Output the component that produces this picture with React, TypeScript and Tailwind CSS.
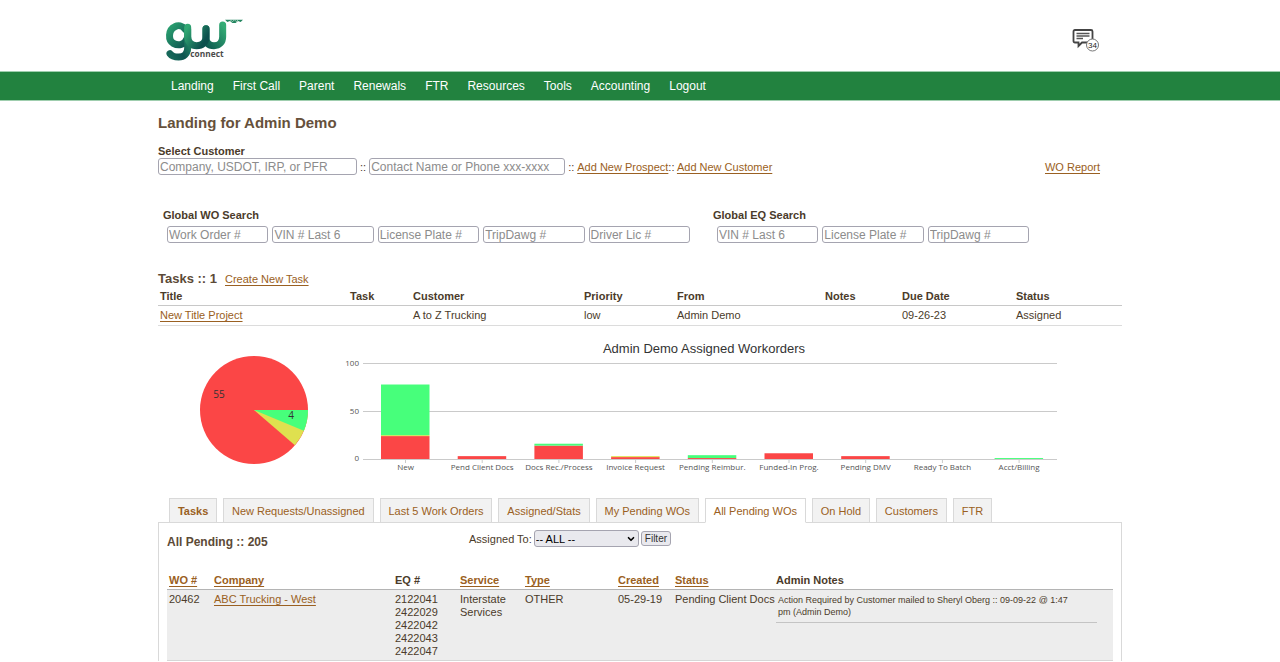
import { ReactNode } from "react";
import { ChevronDown } from "lucide-react";

const NAV = ["Landing", "First Call", "Parent", "Renewals", "FTR", "Resources", "Tools", "Accounting", "Logout"];

const TABS = [
  "Tasks",
  "New Requests/Unassigned",
  "Last 5 Work Orders",
  "Assigned/Stats",
  "My Pending WOs",
  "All Pending WOs",
  "On Hold",
  "Customers",
  "FTR",
];

const BARS = [
  { label: "New", red: 24, yellow: 1, green: 53 },
  { label: "Pend Client Docs", red: 3, yellow: 0, green: 0 },
  { label: "Docs Rec./Process", red: 14, yellow: 0, green: 2 },
  { label: "Invoice Request", red: 2, yellow: 1, green: 0 },
  { label: "Pending Reimbur.", red: 1, yellow: 0, green: 3 },
  { label: "Funded-In Prog.", red: 6, yellow: 0, green: 0 },
  { label: "Pending DMV", red: 3, yellow: 0, green: 0 },
  { label: "Ready To Batch", red: 0, yellow: 0, green: 0 },
  { label: "Acct/Billing", red: 0, yellow: 0, green: 1 },
];

const RED = "#fb4646";
const YELLOW = "#dfe04f";
const GREEN = "#47ff7b";

function Link({ children, bold = false }: { children: ReactNode; bold?: boolean }) {
  return (
    <a
      href="#"
      className={`text-[#9a6022] underline decoration-1 underline-offset-2 [text-decoration-skip-ink:none] ${bold ? "font-bold" : ""}`}
    >
      {children}
    </a>
  );
}

function Field({ name, className = "w-full" }: { name: string; className?: string }) {
  return (
    <input
      type="text"
      aria-label={name}
      placeholder={name}
      className={`h-[17px] rounded-[3px] border border-[#a5a4b0] bg-white px-px text-[12px] leading-[15px] text-[#333] placeholder:text-[#8c8c8c] ${className}`}
    />
  );
}

function Logo() {
  return (
    <svg viewBox="45 22 240 132" className="h-11 w-20" role="img" aria-label="GW Connect">
      <defs>
        <linearGradient id="ring" x1="0" y1="0" x2="1" y2="1">
          <stop offset="0" stopColor="#2aa070" />
          <stop offset="1" stopColor="#0e5550" />
        </linearGradient>
        <linearGradient id="tail" x1="1" y1="0" x2="0" y2="1">
          <stop offset="0" stopColor="#2a9d6e" />
          <stop offset="0.6" stopColor="#0d5450" />
          <stop offset="1" stopColor="#17695a" />
        </linearGradient>
        <linearGradient id="cupA" x1="0" y1="0" x2="1" y2="0.6">
          <stop offset="0" stopColor="#31a873" />
          <stop offset="1" stopColor="#0c504d" />
        </linearGradient>
        <linearGradient id="cupB" x1="0" y1="1" x2="1" y2="0">
          <stop offset="0" stopColor="#0d5a50" />
          <stop offset="1" stopColor="#34ac75" />
        </linearGradient>
      </defs>
      <g fill="none" strokeLinecap="round" strokeWidth="21">
        <path d="M168 54 V82 C168 99 178 105 192 105 C208 105 218 94 218 78 V43" stroke="url(#cupB)" />
        <path d="M106 56 C97 44 84 43 75 48 C54 57 54 89 70 98 C86 107 104 102 110 86" stroke="url(#ring)" />
        <path d="M113 56 V112 C113 130 101 139 86 139 C75 139 65 136 60 129" stroke="url(#tail)" />
        <path d="M113 50 V78 C114 96 125 105 140 105 C157 105 168 95 168 80 V54" stroke="url(#cupA)" />
      </g>
      <path d="M225 27 H279 L272 34 L264 31 L257 37 H247 L240 31 L232 34 Z" fill="#23855f" />
      <path d="M240 27 L248 33 L253 27 L259 33 L265 27" fill="none" stroke="#c7e3d6" strokeWidth="2" />
      <text
        x="121"
        y="139"
        fontSize="25"
        fontWeight="700"
        fill="#4b4b4b"
        stroke="#fff"
        strokeWidth="3"
        paintOrder="stroke"
        fontFamily="Open Sans, sans-serif"
      >
        connect
      </text>
    </svg>
  );
}

function MessageIcon() {
  return (
    <svg viewBox="0 0 28 24" className="h-6 w-7" aria-hidden="true">
      <path
        d="M3 2 H19 Q20.500 2 20.500 3.500 V13 Q20.500 14.500 19 14.500 H10 L6.500 18 V14.500 H3 Q1.500 14.500 1.500 13 V3.500 Q1.500 2 3 2 Z"
        fill="none"
        stroke="#444"
        strokeWidth="1.800"
      />
      <path d="M4.500 5.500 H17.500 M4.500 8 H17.500 M4.500 10.500 H11" stroke="#555" strokeWidth="1.300" />
      <circle cx="20.500" cy="17" r="6" fill="#fff" stroke="#777" strokeWidth="1" />
      <text x="20.500" y="20" fontSize="8" textAnchor="middle" fill="#222" fontFamily="Liberation Sans, sans-serif">
        34
      </text>
    </svg>
  );
}

function PieChart() {
  return (
    <svg viewBox="0 0 110 110" className="h-[110px] w-[110px]" role="img" aria-label="Workorders by state">
      <circle cx="55" cy="55" r="54" fill={RED} />
      <path d="M55 55 L109 55 A54 54 0 0 1 95.900 90.200 Z" fill={YELLOW} />
      <path d="M55 55 L109 55 A54 54 0 0 1 104.800 75.800 Z" fill={GREEN} />
      <g fontSize="10" fill="#333" textAnchor="middle" fontFamily="Open Sans, sans-serif">
        <text x="20" y="43">55</text>
        <text x="92" y="64">4</text>
      </g>
    </svg>
  );
}

function BarChart() {
  const base = 119;
  const perUnit = 0.955;
  return (
    <svg viewBox="0 0 722 138" className="block w-full" role="img" aria-label="Admin Demo Assigned Workorders">
      <text x="364" y="13" fontSize="13" textAnchor="middle" fill="#333" fontFamily="Liberation Sans, sans-serif">
        Admin Demo Assigned Workorders
      </text>
      <g stroke="#cacaca" strokeWidth="1">
        <path d="M23 23.500 H717 M23 71.500 H717 M23 119.500 H717" />
      </g>
      <g fontSize="8" fill="#555" textAnchor="end" fontFamily="Open Sans, sans-serif">
        <text x="19" y="26">100</text>
        <text x="19" y="74">50</text>
        <text x="19" y="121">0</text>
      </g>
      {BARS.map((b, i) => {
        const cx = 65.5 + i * 76.7;
        const r = b.red * perUnit;
        const y = b.yellow * perUnit;
        const g = b.green * perUnit;
        return (
          <g key={b.label}>
            <path d={`M${cx} 119 V123`} stroke="#cacaca" />
            <rect x={cx - 24.5} y={base - r} width="48.5" height={r} fill={RED} />
            <rect x={cx - 24.5} y={base - r - y} width="48.5" height={y} fill={YELLOW} />
            <rect x={cx - 24.5} y={base - r - y - g} width="48.5" height={g} fill={GREEN} />
            <text x={cx} y="130" fontSize="8" textAnchor="middle" fill="#555" fontFamily="Open Sans, sans-serif">
              {b.label}
            </text>
          </g>
        );
      })}
    </svg>
  );
}

function TaskTable() {
  return (
    <table className="w-full table-fixed border-collapse text-left text-[11px] leading-[14px]">
      <colgroup>
        <col className="w-[190px]" />
        <col className="w-[63px]" />
        <col className="w-[171px]" />
        <col className="w-[93px]" />
        <col className="w-[148px]" />
        <col className="w-[77px]" />
        <col className="w-[114px]" />
        <col />
      </colgroup>
      <thead>
        <tr className="border-b border-[#c8c8c8]">
          {["Title", "Task", "Customer", "Priority", "From", "Notes", "Due Date", "Status"].map((h) => (
            <th key={h} className="px-[2px] py-[2px] font-bold">
              {h}
            </th>
          ))}
        </tr>
      </thead>
      <tbody>
        <tr className="border-b border-[#dcdcdc]">
          <td className="px-[2px] pt-[2px] pb-[3px]">
            <Link>New Title Project</Link>
          </td>
          <td />
          <td className="px-[2px] pt-[2px] pb-[3px]">A to Z Trucking</td>
          <td className="px-[2px] pt-[2px] pb-[3px]">low</td>
          <td className="px-[2px] pt-[2px] pb-[3px]">Admin Demo</td>
          <td />
          <td className="px-[2px] pt-[2px] pb-[3px]">09-26-23</td>
          <td className="px-[2px] pt-[2px] pb-[3px]">Assigned</td>
        </tr>
      </tbody>
    </table>
  );
}

function OrderTable() {
  return (
    <table className="w-full table-fixed border-collapse text-left text-[11px] leading-[13px]">
      <colgroup>
        <col className="w-[45px]" />
        <col className="w-[181px]" />
        <col className="w-[65px]" />
        <col className="w-[65px]" />
        <col className="w-[93px]" />
        <col className="w-[57px]" />
        <col className="w-[101px]" />
        <col />
      </colgroup>
      <thead>
        <tr className="border-b border-[#b4b4b4]">
          <th className="px-[2px] py-[2px]"><Link bold>WO #</Link></th>
          <th className="px-[2px] py-[2px]"><Link bold>Company</Link></th>
          <th className="px-[2px] py-[2px] font-bold">EQ #</th>
          <th className="px-[2px] py-[2px]"><Link bold>Service</Link></th>
          <th className="px-[2px] py-[2px]"><Link bold>Type</Link></th>
          <th className="px-[2px] py-[2px]"><Link bold>Created</Link></th>
          <th className="px-[2px] py-[2px]"><Link bold>Status</Link></th>
          <th className="px-[2px] py-[2px] font-bold">Admin Notes</th>
        </tr>
      </thead>
      <tbody>
        <tr className="border-b border-[#d6d6d6] bg-[#ededed] align-top">
          <td className="px-[2px] py-[3px]">20462</td>
          <td className="px-[2px] py-[3px]">
            <Link>ABC Trucking - West</Link>
          </td>
          <td className="px-[2px] pt-[3px] pb-[2px]">
            {["2122041", "2422029", "2422042", "2422043", "2422047"].map((n) => (
              <div key={n}>{n}</div>
            ))}
          </td>
          <td className="px-[2px] py-[3px]">Interstate Services</td>
          <td className="px-[2px] py-[3px]">OTHER</td>
          <td className="px-[2px] py-[3px]">05-29-19</td>
          <td className="px-[2px] py-[3px] whitespace-nowrap">Pending Client Docs</td>
          <td className="py-1 pr-4 pl-[2px]">
            <div className="border-b border-[#c4c4c4] pr-4 pb-1 pl-[2px] text-[9px] leading-3">
              Action Required by Customer mailed to Sheryl Oberg :: 09-09-22 @ 1:47 pm (Admin Demo)
            </div>
          </td>
        </tr>
      </tbody>
    </table>
  );
}

export default function App() {
  return (
    <div className="bg-white font-['Liberation_Sans',Arial,sans-serif] text-[11px] leading-[14px] text-[#4b3b2a]">
      <header className="mx-auto flex h-[71px] max-w-[964px] items-center justify-between pt-2 pr-[22px] pl-[7px]">
        <a href="#" className="block">
          <Logo />
        </a>
        <button type="button" aria-label="Messages">
          <MessageIcon />
        </button>
      </header>

      <nav className="border-y border-[#9fceae] bg-[#22823f]">
        <ul className="mx-auto flex h-7 max-w-[964px] items-center gap-[19px] px-[13px] text-xs text-white">
          {NAV.map((n) => (
            <li key={n}>
              <a href="#">{n}</a>
            </li>
          ))}
        </ul>
      </nav>

      <main className="mx-auto max-w-[964px] pt-[13px]">
        <h1 className="text-[15px] leading-[18px] font-bold text-[#66513b]">Landing for Admin Demo</h1>

        <section className="pt-3">
          <h2 className="font-bold">Select Customer</h2>
          <div className="flex h-[17px] items-center justify-between pr-[22px]">
            <div className="flex items-center gap-[3px]">
              <Field name="Company, USDOT, IRP, or PFR" className="w-[199px]" />
              <span>::</span>
              <Field name="Contact Name or Phone xxx-xxxx" className="w-[196px]" />
              <span>::</span>
              <span>
                <Link>Add New Prospect</Link>:: <Link>Add New Customer</Link>
              </span>
            </div>
            <Link>WO Report</Link>
          </div>
        </section>

        <section className="flex gap-[23px] pt-[33px] pl-[5px]">
          <div>
            <h2 className="pb-1 font-bold">Global WO Search</h2>
            <div className="grid w-[527px] grid-cols-5 gap-1 pl-1">
              {["Work Order #", "VIN # Last 6", "License Plate #", "TripDawg #", "Driver Lic #"].map((n) => (
                <Field key={n} name={n} />
              ))}
            </div>
          </div>
          <div>
            <h2 className="pb-1 font-bold">Global EQ Search</h2>
            <div className="grid w-[316px] grid-cols-3 gap-1 pl-1">
              {["VIN # Last 6", "License Plate #", "TripDawg #"].map((n) => (
                <Field key={n} name={n} />
              ))}
            </div>
          </div>
        </section>

        <section className="pt-7">
          <div className="flex items-baseline gap-2">
            <h2 className="text-[13px] leading-4 font-bold text-[#5c4a37]">Tasks :: 1</h2>
            <Link>Create New Task</Link>
          </div>
          <TaskTable />
        </section>

        <section className="flex items-start pt-[14px] pr-[60px]">
          <div className="shrink-0 pt-[15px] pr-[31px] pl-[41px]">
            <PieChart />
          </div>
          <div className="grow">
            <BarChart />
          </div>
        </section>

        <div className="flex px-[11px] pt-5">
          <ul className="z-10 -mb-px flex w-[823px] gap-[6px] text-center leading-[22px] text-[#9a6022]">
            {TABS.map((t) => (
              <li key={t} className="grow">
                <a
                  href="#"
                  className={`block border border-[#d9d9d9] px-[7px] pt-px whitespace-nowrap ${
                    t === "All Pending WOs" ? "border-b-white bg-white" : "bg-[#f2f2f2]"
                  } ${t === "Tasks" ? "font-bold" : ""}`}
                >
                  {t}
                </a>
              </li>
            ))}
          </ul>
        </div>

        <section className="border border-b-0 border-[#d9d9d9] px-2">
          <div className="flex items-start pt-[7px]">
            <h2 className="w-[302px] pt-1 text-[12px] leading-4 font-bold text-[#5c4a37]">All Pending :: 205</h2>
            <form className="flex items-center gap-[2px]">
              <label htmlFor="assigned">Assigned To:</label>
              <div className="relative flex">
                <select
                  id="assigned"
                  className="h-[17px] w-[105px] appearance-none rounded-[3px] border border-[#a5a4b0] bg-[#e9e9ee] px-px text-[11px] leading-[14px] text-black"
                >
                  <option>-- ALL --</option>
                </select>
                <ChevronDown
                  className="pointer-events-none absolute top-1 right-[3px] size-[10px] text-black"
                  strokeWidth={4}
                />
              </div>
              <button
                type="button"
                className="h-[15px] rounded-[3px] border border-[#a5a4b0] bg-[#e9e9ee] px-[3px] text-[10px] leading-3 text-[#333]"
              >
                Filter
              </button>
            </form>
          </div>
          <div className="pt-[22px]">
            <OrderTable />
          </div>
        </section>
      </main>
    </div>
  );
}
